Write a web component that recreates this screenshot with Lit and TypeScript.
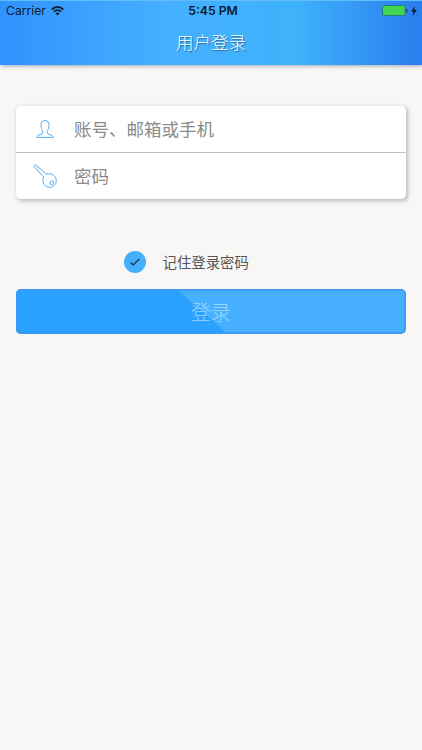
import { LitElement, html, css, svg } from "lit";
import { customElement, property } from "lit/decorators.js";

@customElement("status-bar")
class StatusBar extends LitElement {
  static styles = css`
    :host { display: grid; grid-template-columns: 1fr auto 1fr; align-items: center; height: 19px; padding: 0 5px 0 6px; font: 12.2px Inter, "Liberation Sans", sans-serif; color: #0b1a2c; }
    .left, .right { display: flex; align-items: center; gap: 5px; }
    .right { justify-content: flex-end; gap: 3px; }
    .time { font-weight: 600; font-size: 12.2px; padding-left: 3px; }
    svg { display: block; }
  `;
  render() {
    return html`
      <div class="left"><span>Carrier</span>
        <svg width="13" height="10" viewBox="0 0 13 10" fill="none" stroke="#0b1a2c" stroke-width="1.6">
          <path d="M.7 3.6C4-.1 9-.1 12.3 3.6" /><path d="M2.8 5.8C5 3.5 8 3.5 10.2 5.8" />
          <path d="M6.5 9.4 4.4 7.2C5.6 6.1 7.4 6.1 8.6 7.2Z" fill="#0b1a2c" stroke="none" />
        </svg>
      </div>
      <span class="time">5:45 PM</span>
      <div class="right">
        <svg width="26" height="11" viewBox="0 0 26 11">
          <rect x=".5" y=".5" width="22.6" height="10" rx="1.2" fill="#43d551" stroke="#217e78" />
          <path d="M24 3.5c1.8.4 1.8 3.6 0 4z" fill="#173e70" />
        </svg>
        <svg width="6" height="10" viewBox="0 0 6 10"><path d="M4 0 .2 5.6h2.3L1.6 10 5.9 4.1H3.4z" fill="#0b1a2c" /></svg>
      </div>`;
  }
}

const userIcon = svg`<path d="M9 .6C6 .6 4.9 2.4 5 5.4c.1 2.6.6 4 1.5 5.3.5.8.5 2.3-.1 2.9-1.4 1.3-5.3 1.1-5.8 3.8h16.8c-.5-2.7-4.4-2.5-5.8-3.8-.6-.6-.6-2.1-.1-2.9.9-1.3 1.4-2.7 1.5-5.3C13.1 2.4 12 .6 9 .6Z" />`;
const keyIcon = svg`<path d="M.7 2.7Q.8.8 2.8.8L13.4 10.1C19 8.6 23.4 12.3 23.3 16.8C23.2 20.6 20.3 23.3 16.8 23.3C12.4 23.3 9.7 20.1 9.9 16.4C10 15 10.3 14 10.8 13.1L9.3 11.6 8.5 10.2 7.2 9.6 6.4 8.1 5 7.5 4.3 6.1 3.1 5.3Z" /><path d="M3.2 3 5.2 4.8" stroke-width=".7" /><circle cx="18.8" cy="18.8" r="1.9" />`;

@customElement("login-field")
class LoginField extends LitElement {
  @property() icon = "user";
  @property() label = "";
  static styles = css`
    :host { display: flex; align-items: center; height: 46px; }
    .icon { width: 58px; display: flex; justify-content: center; }
    svg { fill: none; stroke: #55adf3; stroke-width: 1; stroke-linejoin: round; display: block; }
    .label { font: 17.5px/26px "Noto Sans CJK SC", sans-serif; color: #8a8a8a; }
  `;
  render() {
    const user = this.icon === "user";
    return html`
      <span class="icon">${user
        ? html`<svg width="18" height="18" viewBox="0 0 18 18">${userIcon}</svg>`
        : html`<svg width="24" height="24" viewBox="0 0 24 24">${keyIcon}</svg>`}</span>
      <span class="label">${this.label}</span>`;
  }
}

@customElement("app-root")
class AppRoot extends LitElement {
  static styles = css`
    :host { display: flex; flex-direction: column; height: 750px; background: #f8f7f6; font-family: "Noto Sans CJK SC", sans-serif; overflow: hidden; }
    header { height: 65px; flex: none; box-sizing: border-box; border-top: 1px solid #62bdfc; background: linear-gradient(90deg, #3092ff 0, #45b0ff 40%, #3eb2fb 70%, #2b80ef 98%); box-shadow: 1px 1px 4px #a3a3b4; }
    .title { height: 43px; text-align: center; font-size: 17.5px; line-height: 43px; font-weight: 300; color: #fff; text-shadow: 1px 1px 1px #28659b; }
    main { padding: 41px 16px 0; }
    .card { height: 93px; width: 389.5px; border-radius: 5px; background: #fff; box-shadow: 1.5px 1.5px 4px #b9b8c2; }
    .first { border-bottom: 1px solid #bfbfc1; }
    .remember { display: flex; align-items: center; height: 22px; margin: 52px 0 15.5px 108px; gap: 16.5px; font-size: 14.4px; line-height: 22px; color: #555; }
    .check { width: 22px; height: 22px; border-radius: 50%; background: #46affb; display: grid; place-items: center; }
    .login { display: block; position: relative; overflow: hidden; width: 389.5px; height: 45.5px; padding: 0; border: 0; border-radius: 5px; background: #48b1ff; color: #9bd4ff; font: 300 20px/45px "Noto Sans CJK SC", sans-serif; }
    .login::before { content: ""; position: absolute; inset: 0; background: #2aa1ff; clip-path: polygon(0 0, 160px 0, 212px 100%, 0 100%); }
    .login::after { content: ""; position: absolute; inset: 0; border-radius: 5px; box-shadow: inset 0 0 0 1.7px #3b99f5; }
    .caption { position: relative; }
  `;
  render() {
    return html`
      <header><status-bar></status-bar><div class="title">用户登录</div></header>
      <main>
        <div class="card">
          <login-field class="first" icon="user" label="账号、邮箱或手机"></login-field>
          <login-field icon="key" label="密码"></login-field>
        </div>
        <div class="remember">
          <span class="check"><svg width="10" height="8" viewBox="0 0 10 8" fill="none" stroke="#15293c" stroke-width="1.2"><path d="M.6 4.4 3.2 7 9.4.8" /></svg></span>
          <span>记住登录密码</span>
        </div>
        <button class="login"><span class="caption">登录</span></button>
      </main>`;
  }
}
